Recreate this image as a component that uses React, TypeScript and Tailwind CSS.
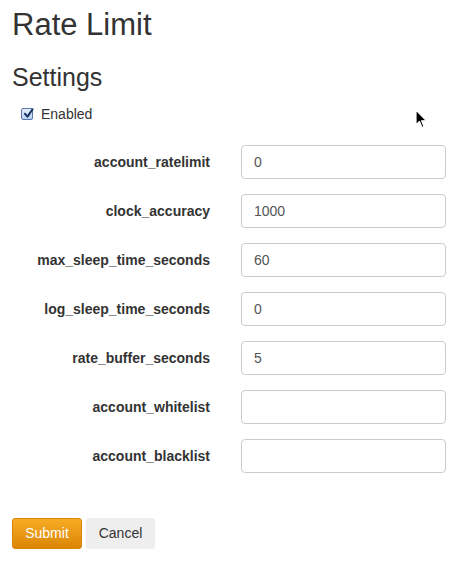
import React from "react";

const rows: [string, string][] = [
  ["account_ratelimit", "0"],
  ["clock_accuracy", "1000"],
  ["max_sleep_time_seconds", "60"],
  ["log_sleep_time_seconds", "0"],
  ["rate_buffer_seconds", "5"],
  ["account_whitelist", ""],
  ["account_blacklist", ""],
];

export default function App() {
  return (
    <div
      className="relative w-[472px] h-[562px] bg-white text-[#333333] pl-3"
      style={{ fontFamily: '"Liberation Sans", Arial, Helvetica, sans-serif' }}
    >
      <h1 className="text-[31px] leading-[36px] pt-[7px] font-normal">Rate Limit</h1>
      <h2 className="text-[25px] leading-[30px] mt-[19px] font-normal">Settings</h2>
      <label className="flex items-center mt-[13px] ml-[9px] h-[18px] text-[14px] leading-[18px]">
        <span className="relative flex items-center justify-center w-[12px] h-[12px] rounded-[2px] border border-[#5876a6] bg-gradient-to-b from-[#e4eefc] to-[#b9d0f2]">
          <svg width="11" height="11" viewBox="0 0 11 11" className="absolute left-[1px] -top-[1px]">
            <path d="M2 5.8 L4.5 8.6 L9.6 1.2" fill="none" stroke="#14305e" strokeWidth="2" strokeLinecap="round" strokeLinejoin="round" />
          </svg>
        </span>
        <span className="ml-[8px]">Enabled</span>
      </label>
      <div className="flex flex-col gap-[15px] mt-[22px]">
        {rows.map(([label, value]) => (
          <div key={label} className="flex items-center h-[34px]">
            <div className="w-[198px] text-right font-bold text-[14px] leading-[18px]">{label}</div>
            <input
              type="text"
              defaultValue={value}
              className="ml-[31px] w-[205px] h-[34px] border border-[#cccccc] rounded-[4px] px-[12px] text-[14px] text-[#555555] bg-white outline-none"
            />
          </div>
        ))}
      </div>
      <div className="flex items-center gap-[4px] mt-[45px]">
        <button className="h-[31px] w-[70px] rounded-[3px] border border-[#d68508] bg-gradient-to-b from-[#f7ab22] to-[#dc8605] text-white text-[14px]">
          Submit
        </button>
        <button className="h-[31px] w-[69px] rounded-[3px] bg-[#eeeeee] text-[#333333] text-[14px]">
          Cancel
        </button>
      </div>
      <svg
        className="absolute left-[414px] top-[108px]"
        width="14"
        height="22"
        viewBox="0 0 14 22"
      >
        <path
          d="M2 2 L2 17 L5.5 13.5 L8 19.5 L10 18.6 L7.6 12.8 L12.5 12.8 Z"
          fill="#000"
          stroke="#fff"
          strokeWidth="1.2"
          strokeLinejoin="round"
        />
      </svg>
    </div>
  );
}
